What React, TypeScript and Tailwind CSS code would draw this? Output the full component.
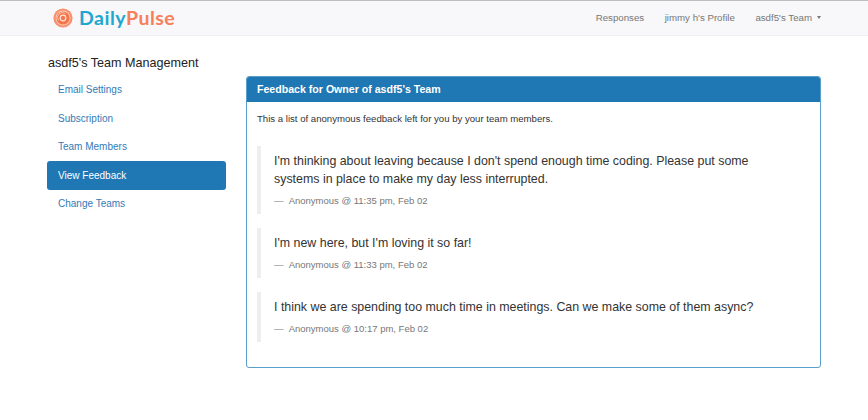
import React from "react";

const sideLinks = ["Email Settings", "Subscription", "Team Members", "View Feedback", "Change Teams"];

const feedback = [
  {
    text: "I'm thinking about leaving because I don't spend enough time coding. Please put some systems in place to make my day less interrupted.",
    meta: "Anonymous @ 11:35 pm, Feb 02",
  },
  { text: "I'm new here, but I'm loving it so far!", meta: "Anonymous @ 11:33 pm, Feb 02" },
  {
    text: "I think we are spending too much time in meetings. Can we make some of them async?",
    meta: "Anonymous @ 10:17 pm, Feb 02",
  },
];

function Logo() {
  return (
    <div className="flex items-center gap-[6px]">
      <svg width="20" height="20" viewBox="0 0 20 20">
        <circle cx="10" cy="10" r="9.6" fill="#f8906c" />
        <circle cx="10" cy="10" r="7.4" fill="#fbd2c0" />
        <circle cx="10" cy="10" r="6.6" fill="#f5744a" />
        <path d="M5.5 12.5 A5 5 0 0 1 12.5 5.5" fill="none" stroke="#fbd2c0" strokeWidth="0.8" />
        <circle cx="10" cy="10" r="3.4" fill="#fde4d8" />
        <circle cx="10" cy="10" r="2.2" fill="#f5744a" />
      </svg>
      <span className="font-['Lato',sans-serif] text-[19.5px] font-bold leading-none tracking-[0.5px]">
        <span className="text-[#1fa8cf]">Daily</span>
        <span className="text-[#f5805a]">Pulse</span>
      </span>
    </div>
  );
}

export default function App() {
  return (
    <div className="h-[420px] w-[868px] overflow-hidden bg-white font-['Liberation_Sans',sans-serif]">
      <nav className="flex h-[36px] items-center justify-between border-t border-b border-t-[#bdbdbd] border-b-[#f0eef2] bg-[#f8f7f9] pl-[53px] pr-[47px]">
        <Logo />
        <div className="flex items-center gap-[20.5px] text-[9.7px] text-[#777777]">
          <span>Responses</span>
          <span>jimmy h's Profile</span>
          <span className="flex items-center gap-[5px]">
            asdf5's Team
            <span className="h-0 w-0 border-x-[2.5px] border-t-[3px] border-x-transparent border-t-[#777777]" />
          </span>
        </div>
      </nav>

      <div className="flex gap-[20px] pl-[47px] pt-[18px]">
        <aside className="w-[179px]">
          <h2 className="pl-px text-[12.6px] leading-[18px] text-[#222222]">asdf5's Team Management</h2>
          <ul className="mt-[3.5px] text-[10px]">
            {sideLinks.map((link) =>
              link === "View Feedback" ? (
                <li key={link} className="flex h-[28.5px] items-center rounded-[3px] bg-[#1f77b4] px-[11px] text-white">
                  {link}
                </li>
              ) : (
                <li key={link} className="flex h-[28.5px] items-center px-[11px] text-[#337ab7]">
                  {link}
                </li>
              ),
            )}
          </ul>
        </aside>

        <section className="mt-[22px] h-[292px] w-[575px] rounded-[3px] border border-[#5a9ecb]">
          <div className="flex h-[25px] items-center rounded-t-[2px] bg-[#1f77b4] px-[10px] text-[10.6px] font-bold text-white">
            Feedback for Owner of asdf5's Team
          </div>
          <div className="px-[10px] pt-[10px]">
            <p className="text-[9.6px] leading-[14px] text-[#333333]">
              This a list of anonymous feedback left for you by your team members.
            </p>
            <div className="mt-[20px] flex flex-col gap-[14px]">
              {feedback.map((item) => (
                <blockquote key={item.meta} className="border-l-[4px] border-[#eeeeee] pb-[4px] pl-[13px] pr-[20px] pt-[6px]">
                  <p className="text-[12.4px] leading-[18px] text-[#333333]">{item.text}</p>
                  <footer className="mt-[4px] text-[9.5px] leading-[18px] text-[#777777]">
                    <span className="mr-[3px]">—</span> {item.meta}
                  </footer>
                </blockquote>
              ))}
            </div>
          </div>
        </section>
      </div>
    </div>
  );
}
